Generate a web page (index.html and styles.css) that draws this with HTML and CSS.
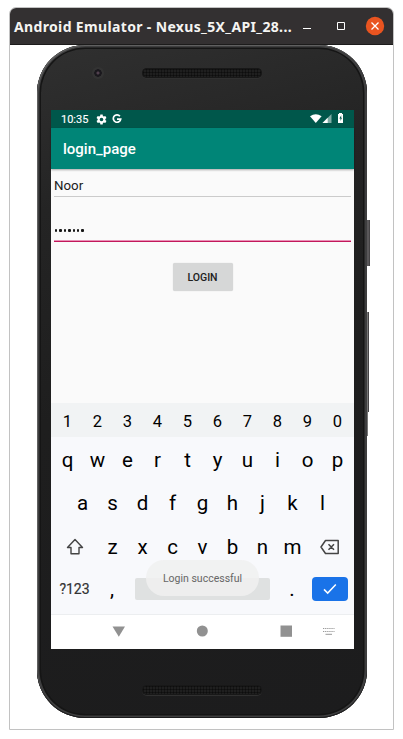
FILE: index.html
```html
<!DOCTYPE html>
<html lang="en">
<head>
<meta charset="utf-8">
<title>Android Emulator</title>
<link rel="stylesheet" href="styles.css">
</head>
<body>
<div class="window">
  <header class="titlebar">
    <span class="title">Android Emulator - Nexus_5X_API_28...</span>
    <svg class="controls" width="100" height="38" viewBox="0 0 100 38">
      <path d="M9 20.500h8M43.500 14.500h7v7h-7z" fill="none" stroke="#fff"/>
      <circle cx="81" cy="18" r="9.200" fill="#e95420"/>
      <path d="M77.500 14.500l7 7m0-7l-7 7" stroke="#fff" stroke-width="1.300"/>
    </svg>
  </header>
  <main class="desk">
    <div class="phone">
      <i class="side power"></i><i class="side volume"></i><i class="side volume-base"></i>
      <div class="bezel-top"><i class="camera"></i><i class="speaker"></i></div>
      <div class="screen">
        <div class="status">
          <span class="clock">10:35</span>
          <svg class="gear" width="11" height="11" viewBox="0 0 24 24"><path fill="#fff" fill-rule="evenodd" d="M9.500 1h5l.6 3.200 2.100 1.200 3.100-1.100 2.500 4.300-2.500 2.100v2.500l2.500 2.100-2.500 4.300-3.100-1.100-2.100 1.200-.6 3.300h-5l-.6-3.300-2.100-1.200-3.100 1.100-2.500-4.300 2.500-2.100v-2.500L1.200 8.600l2.500-4.300 3.100 1.100 2.100-1.200zM12 8a4 4 0 1 0 0 8 4 4 0 0 0 0-8z"/></svg>
          <svg class="google" width="10" height="10" viewBox="0 0 10 10"><path fill="none" stroke="#fff" stroke-width="1.700" d="M7.900 2.200A3.700 3.700 0 1 0 8.700 5.100H5"/></svg>
          <svg class="signals" width="36" height="12" viewBox="0 0 36 12">
            <path fill="#fff" d="M0 3.300Q5.800-.8 11.600 3.300L5.800 10z"/>
            <path fill="#80aca6" d="M21.500 1v9h-9z"/><path fill="#fff" d="M17.700 4.800V10h-5.200z"/>
            <path fill="#fff" d="M28 1h1V0h3v1h1v9h-5V1z"/><path fill="#00574b" d="M31.300 2.300L29.300 5.600h1.200v2.400l1.500-3.300h-.9z"/>
          </svg>
        </div>
        <div class="appbar">login_page</div>
        <div class="form">
          <div class="field">Noor</div>
          <div class="field password"><i></i><i></i><i></i><i></i><i></i><i></i><i></i></div>
          <button class="login">LOGIN</button>
        </div>
        <div class="keyboard">
          <div class="row numbers"><b>1</b><b>2</b><b>3</b><b>4</b><b>5</b><b>6</b><b>7</b><b>8</b><b>9</b><b>0</b></div>
          <div class="row top"><b>q</b><b>w</b><b>e</b><b>r</b><b>t</b><b>y</b><b>u</b><b>i</b><b>o</b><b>p</b></div>
          <div class="row home"><b>a</b><b>s</b><b>d</b><b>f</b><b>g</b><b>h</b><b>j</b><b>k</b><b>l</b></div>
          <div class="row lower">
            <span class="wide"><svg width="18" height="18" viewBox="0 0 18 18"><path fill="none" stroke="#444" stroke-width="1.400" stroke-linejoin="round" d="M9 1.500L1.500 9.500H5v6.300h8V9.500h3.500z"/></svg></span>
            <b>z</b><b>x</b><b>c</b><b>v</b><b>b</b><b>n</b><b>m</b>
            <span class="wide"><svg width="20" height="16" viewBox="0 0 20 16"><path fill="none" stroke="#444" stroke-width="1.500" stroke-linejoin="round" d="M5.500 1.500h12.700v13H5.500L1 8zM8.500 5.200l5.500 5.600m0-5.600l-5.500 5.600"/></svg></span>
          </div>
          <div class="row bottom">
            <span class="symbols">?123</span><b class="comma">,</b><i class="space"></i><b class="dot">.</b>
            <span class="enter"><svg width="16" height="14" viewBox="0 0 16 14"><path fill="none" stroke="#fff" stroke-width="1.500" d="M2 7.400l3.700 3.700L13.800 2.500"/></svg></span>
            <div class="toast">Login successful</div>
          </div>
        </div>
        <svg class="nav" width="303" height="35" viewBox="0 0 303 35">
          <path fill="#919191" d="M61.500 12.500h12.500l-6.200 10.300z"/><circle cx="151.300" cy="17" r="5.500" fill="#919191"/><path fill="#919191" d="M229.500 11.500H241v11.300h-11.500z"/>
          <path stroke="#999" stroke-width="1" stroke-dasharray="1.300 .8" d="M272 14.500h11.500M272 17.500h11.500"/><path stroke="#999" d="M274.500 20.300h6.500"/>
        </svg>
      </div>
      <div class="bezel-bottom"><i class="speaker"></i></div>
    </div>
  </main>
</div>
</body>
</html>
```
FILE: styles.css
```css
* { box-sizing: border-box; }
body { margin: 0; background: #fff; font-family: Roboto, sans-serif; }
b { font-weight: 400; }
.window { width: 385px; height: 723px; margin: 7px 0 0 9px; border: 1px solid #c2c2c2; border-radius: 7px 7px 0 0; overflow: hidden; }
.titlebar { height: 37px; background: #333031; border-bottom: 1px solid #1c1b1b; display: flex; justify-content: space-between; }
.title { padding-left: 4px; font: 700 14px/37px "Noto Sans", sans-serif; color: #f5f4f2; white-space: nowrap; letter-spacing: .35px; }
.controls { flex: none; margin-right: -1px; }
.desk { padding-left: 27px; }
.phone { position: relative; width: 330px; height: 673px; padding: 0 13px 0 14px; border-radius: 48px; background: linear-gradient(165deg, #303030 0%, #242424 22%, #1e1e1e 50%, #1c1c1d 100%); box-shadow: inset 0 -1px 0 #1c1c1d, inset 1px 1px 0 #606060, inset 0 0 0 2.500px #3e3e3f, inset 0 0 0 4px #151515; }
.side { position: absolute; left: 330px; background: #5a585a; border-right: 1px solid #464446; }
.power { top: 175px; width: 3px; height: 46px; }
.volume { top: 267px; width: 2px; height: 100px; background: #777; }
.volume-base { top: 367px; width: 1px; height: 24px; border-color: #777; }
.bezel-top { height: 65px; display: flex; padding: 22px 0 0 41px; }
.camera { width: 12px; height: 12px; border-radius: 50%; background: radial-gradient(circle, #51404e 0 1px, #1a181d 2px 3.500px, #333 4px); }
.speaker { display: block; width: 120px; height: 10px; border-radius: 6px; background: radial-gradient(circle, #0d0d0d 0 .8px, #1f1f1f 1.300px) 0 0 / 3px 3px; box-shadow: inset 0 0 0 1px #181818, 0 1px 0 #303030; }
.bezel-top .speaker { margin: 1px 0 0 38px; }
.bezel-bottom { padding: 36px 0 0 91px; }
.screen { width: 303px; height: 539px; background: #fafafa; display: flex; flex-direction: column; }
.status { height: 18px; background: #00574b; color: #fff; display: flex; align-items: center; padding: 0 8px 0 10px; flex: none; }
.clock { font-size: 11px; width: 35px; font-weight: 400; padding-top: 1px; -webkit-text-stroke: .15px #fff; }
.google { margin-left: 5px; }
.signals { margin-left: auto; }
.appbar { height: 41px; flex: none; background: #008577; box-shadow: 0 1px 2px #0005; color: #fff; font: 500 15px/43px Roboto, sans-serif; padding-left: 12px; }
.form { height: 234px; flex: none; padding: 0 3px; display: flex; flex-direction: column; }
.field { height: 28px; border-bottom: 1px solid #cbcbcb; font-size: 13.300px; line-height: 34px; color: #202020; }
.password { height: 45px; border-bottom: 0; box-shadow: inset 0 -1px 0 #c2185b, inset 0 -2px 0 #e991b6; display: flex; gap: 2px; padding: 32px 0 0 1px; }
.password i { width: 2.400px; height: 3px; border-radius: 1px; background: #151515; }
.login { margin: 21px 0 0 118.500px; width: 60px; height: 28px; padding: 0; border: 0; border-radius: 2px; background: #d6d7d7; box-shadow: 0 0 1px #0003; font: 500 10.500px Roboto, sans-serif; color: #202020; }
.keyboard { height: 211px; flex: none; background: #f8f9fc; color: #000; }
.row { display: flex; padding: 0 1px 0 1.500px; height: 43px; font-size: 20.500px; line-height: 46px; }
.row b { width: 30px; text-align: center; flex: none; }
.numbers { height: 34px; background: #f1f3f4; font-size: 16.500px; line-height: 38px; }
.home { padding-left: 16.500px; height: 44px; }
.lower { height: 43px; }
.wide { width: 45px; display: flex; align-items: center; justify-content: center; padding-top: 2px; }
.bottom { position: relative; height: 47px; align-items: center; padding: 0 2px 4px 1px; }
.symbols { width: 45px; text-align: center; font: 14px Roboto, sans-serif; color: #333; -webkit-text-stroke: .2px #333; }
.space { width: 135px; height: 22px; margin: 0 7px 0 8px; border-radius: 2px; background: #dfe1e1; }
.enter { width: 36px; height: 24px; margin-left: 5px; border-radius: 4px; background: #1a73e8; display: flex; align-items: center; justify-content: center; }
.toast { position: absolute; left: 95px; top: -7px; width: 113px; height: 36px; border-radius: 18px; background: #f0f0f0dd; color: #666; text-align: center; font: 10.500px/38px Roboto, sans-serif; }
.nav { display: block; flex: none; background: #fff; box-shadow: inset 0 1px 0 #eceef0; }
```
